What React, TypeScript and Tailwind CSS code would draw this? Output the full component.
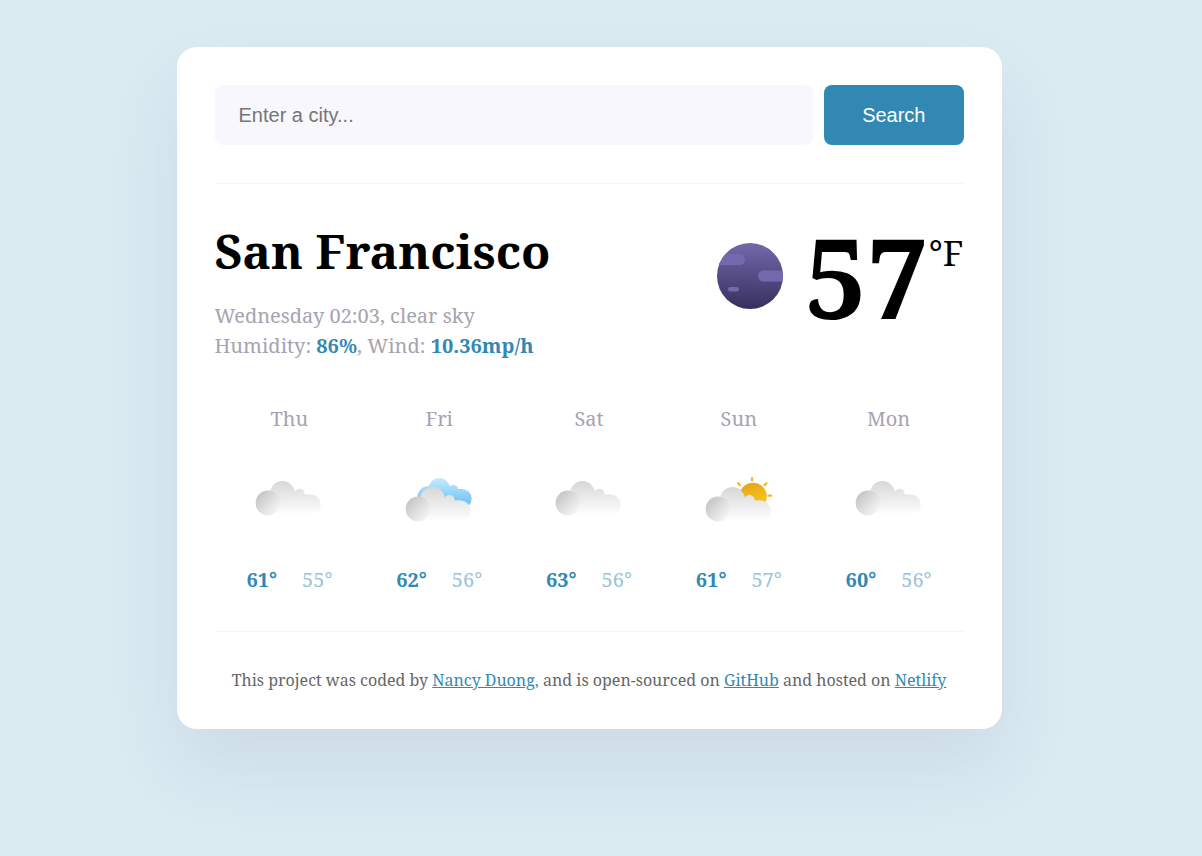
import React from "react";

type Kind = "cloud" | "broken" | "partly";

const days: { day: string; kind: Kind; high: number; low: number }[] = [
  { day: "Thu", kind: "cloud", high: 61, low: 55 },
  { day: "Fri", kind: "broken", high: 62, low: 56 },
  { day: "Sat", kind: "cloud", high: 63, low: 56 },
  { day: "Sun", kind: "partly", high: 61, low: 57 },
  { day: "Mon", kind: "cloud", high: 60, low: 56 },
];

function WeatherIcon({ kind, id }: { kind: Kind; id: string }) {
  const drop = kind === "cloud" ? 0 : 6;
  return (
    <svg viewBox="0 0 80 80" className="size-20" aria-hidden="true">
      <defs>
        <linearGradient id={`${id}-body`} gradientUnits="userSpaceOnUse" x1="0" y1="21" x2="0" y2="55">
          <stop offset="0" stopColor="#d7d7d7" />
          <stop offset="1" stopColor="#ffffff" />
        </linearGradient>
        <linearGradient id={`${id}-ball`} x1="0.05" y1="0.25" x2="0.8" y2="0.95">
          <stop offset="0" stopColor="#c6c6c6" />
          <stop offset="1" stopColor="#f6f6f6" />
        </linearGradient>
        <linearGradient id={`${id}-sky`} gradientUnits="userSpaceOnUse" x1="0" y1="18" x2="0" y2="48">
          <stop offset="0" stopColor="#c9e9fd" />
          <stop offset="1" stopColor="#5fbdf3" />
        </linearGradient>
        <linearGradient id={`${id}-sun`} x1="0" y1="0" x2="0.3" y2="1">
          <stop offset="0" stopColor="#e3a01f" />
          <stop offset="1" stopColor="#fbc91c" />
        </linearGradient>
      </defs>
      {kind === "broken" && (
        <g fill={`url(#${id}-sky)`}>
          <circle cx="29.500" cy="37" r="11" />
          <circle cx="40.300" cy="28.700" r="10.700" />
          <circle cx="54.300" cy="29.700" r="4.800" />
          <circle cx="63" cy="38.700" r="9.700" />
          <rect x="30" y="29" width="33" height="19" />
        </g>
      )}
      {kind === "partly" && (
        <g>
          <circle cx="54" cy="36.500" r="13.800" fill={`url(#${id}-sun)`} />
          <path
            d="M53 18v2.500M39.200 23.200l1.700 2M67.400 23.200l-1.700 2M69.500 35.700h2.500"
            stroke="#f2b824"
            strokeWidth="2.200"
            strokeLinecap="round"
          />
        </g>
      )}
      <g transform={`translate(0 ${drop})`}>
        <g fill={`url(#${id}-body)`}>
          <circle cx="33.500" cy="33.500" r="12.500" />
          <circle cx="50.500" cy="34" r="5.200" />
          <circle cx="61.500" cy="44.700" r="10.300" />
          <rect x="21" y="34.400" width="40.500" height="20.600" />
        </g>
        <circle cx="19" cy="43" r="12.400" fill={`url(#${id}-ball)`} />
      </g>
    </svg>
  );
}

function Planet() {
  return (
    <svg viewBox="0 0 66 66" className="mt-[13px] size-[66px]" role="img" aria-label="clear sky">
      <defs>
        <linearGradient id="planet" x1="0" y1="0" x2="0" y2="1">
          <stop offset="0" stopColor="#7468ab" />
          <stop offset="1" stopColor="#382f5e" />
        </linearGradient>
        <clipPath id="disc">
          <circle cx="33" cy="33" r="33" />
        </clipPath>
      </defs>
      <g clipPath="url(#disc)">
        <rect width="66" height="66" fill="url(#planet)" />
        <g fill="#7469ac">
          <rect x="-10" y="11" width="38" height="11" rx="5.500" />
          <rect x="41" y="27.500" width="40" height="11" rx="5.500" />
          <rect x="11" y="44" width="11" height="4.500" rx="2.200" />
        </g>
      </g>
    </svg>
  );
}

const link = "text-[#3189b3] underline";

export default function App() {
  return (
    <div className="min-h-screen bg-[#daebf2] py-[47px] pr-6 font-['Noto_Serif','Droid_Serif','Liberation_Serif',serif]">
      <main className="mx-auto max-w-[825px] rounded-[20px] bg-white px-[38px] pt-[38px] pb-[37px] shadow-[0_38px_75px_rgba(65,50,100,0.09)]">
        <form
          className="flex gap-[11px] border-b border-[#f5f5f5] pb-[38px] font-['Liberation_Sans',sans-serif] text-xl"
          onSubmit={(e) => e.preventDefault()}
        >
          <input
            type="search"
            aria-label="City"
            placeholder="Enter a city..."
            className="h-[60px] min-w-0 flex-1 rounded-lg bg-[#f8f7fe] px-6 placeholder:text-[#757575]"
          />
          <button type="submit" className="h-[60px] rounded-lg bg-[#3189b3] px-[38px] text-white">
            Search
          </button>
        </form>

        <section className="flex justify-between pt-[38px]">
          <div>
            <h1 className="text-[48px] leading-[58px] font-bold text-black">San Francisco</h1>
            <p className="mt-[21px] text-xl leading-[30px] text-[#a7a3b0]">
              Wednesday 02:03, clear sky
              <br />
              Humidity: <strong className="text-[#3189b3]">86%</strong>, Wind:{" "}
              <strong className="text-[#3189b3]">10.36mp/h</strong>
            </p>
          </div>
          <div className="flex items-start pt-2 text-black">
            <Planet />
            <span className="ml-[22px] text-[110px] leading-[92px] font-bold">57</span>
            <span className="text-[35px] leading-[46px]">°F</span>
          </div>
        </section>

        <section className="grid grid-cols-5 pt-[43px] pb-[36px] text-xl leading-[30px]">
          {days.map((d) => (
            <div key={d.day} className="flex flex-col items-center">
              <h2 className="text-[#a7a3b0]">{d.day}</h2>
              <div className="pt-[26px] pb-[25px]">
                <WeatherIcon kind={d.kind} id={d.day} />
              </div>
              <div className="flex gap-[25px]">
                <span className="font-bold text-[#3189b3]">{d.high}°</span>
                <span className="text-[#98c4d9]">{d.low}°</span>
              </div>
            </div>
          ))}
        </section>

        <footer className="border-t border-[#f5f5f5] pt-9 text-center text-base leading-6 text-[#666666]">
          This project was coded by{" "}
          <a href="#nancy" className={link}>Nancy Duong</a>
          <span className="text-[#3189b3]">,</span> and is open-sourced on{" "}
          <a href="#github" className={link}>GitHub</a> and hosted on{" "}
          <a href="#netlify" className={link}>Netlify</a>
        </footer>
      </main>
    </div>
  );
}
